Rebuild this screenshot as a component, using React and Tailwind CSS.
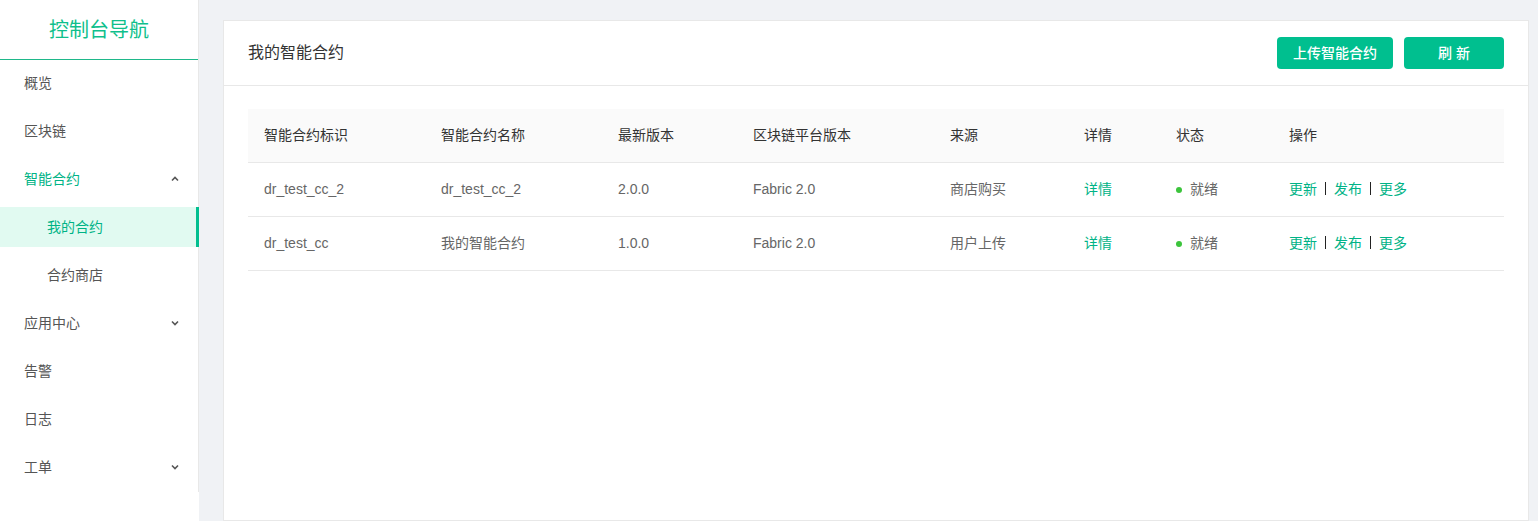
import React from "react";

const font = { fontFamily: '"Liberation Sans", "Noto Sans CJK SC", sans-serif' };

function Chevron({ up }) {
  return (
    <svg width="10" height="10" viewBox="0 0 10 10" className="text-[#555]">
      <path
        d={up ? "M2 6.5 L5 3.5 L8 6.5" : "M2 3.5 L5 6.5 L8 3.5"}
        fill="none"
        stroke="currentColor"
        strokeWidth="1.6"
      />
    </svg>
  );
}

const menu = [
  { label: "概览" },
  { label: "区块链" },
  { label: "智能合约", open: true, active: true },
  { label: "我的合约", sub: true, selected: true },
  { label: "合约商店", sub: true },
  { label: "应用中心", arrow: true },
  { label: "告警" },
  { label: "日志" },
  { label: "工单", arrow: true },
];

const rows = [
  {
    id: "dr_test_cc_2",
    name: "dr_test_cc_2",
    ver: "2.0.0",
    platform: "Fabric 2.0",
    source: "商店购买",
  },
  {
    id: "dr_test_cc",
    name: "我的智能合约",
    ver: "1.0.0",
    platform: "Fabric 2.0",
    source: "用户上传",
  },
];

const cols = ["w-[177px]", "w-[177px]", "w-[135px]", "w-[197px]", "w-[134px]", "w-[92px]", "w-[113px]", "flex-1"];

export default function App() {
  return (
    <div className="flex h-[521px] w-full bg-[#f0f2f5] overflow-hidden" style={font}>
      {/* Sidebar */}
      <div className="w-[199px] shrink-0 bg-white">
        <div className="h-[492px] border-r border-[#e8e8e8]">
          <div className="flex h-[60px] items-center justify-center border-b border-[#1fb88a] text-[20px] text-[#0fbf8c]">
            控制台导航
          </div>
          <div className="flex flex-col gap-[8px] pt-[3px]">
            {menu.map((m) => (
              <div
                key={m.label}
                className={`relative flex h-[40px] items-center justify-between pr-[18px] text-[14px] ${
                  m.sub ? "pl-[47px]" : "pl-[24px]"
                } ${m.selected ? "bg-[#e1faf1] text-[#00b386]" : m.active ? "text-[#00b386]" : "text-[#555]"}`}
              >
                <span>{m.label}</span>
                {m.open && <Chevron up />}
                {m.arrow && <Chevron />}
                {m.selected && <span className="absolute right-[-1px] top-0 h-full w-[3px] bg-[#00bf8f]" />}
              </div>
            ))}
          </div>
        </div>
      </div>

      {/* Main */}
      <div className="flex-1 pl-[24px] pr-[9px] pt-[20px]">
        <div className="h-full border border-[#e8e8e8] bg-white">
          <div className="flex h-[65px] items-center justify-between border-b border-[#e8e8e8] pl-[24px] pr-[24px]">
            <span className="text-[16px] text-[#333]">我的智能合约</span>
            <div className="flex gap-[11px]">
              <button className="h-[32px] w-[116px] rounded-[4px] bg-[#00bf8f] text-[14px] font-medium text-white">
                上传智能合约
              </button>
              <button className="h-[32px] w-[100px] rounded-[4px] bg-[#00bf8f] text-[14px] font-medium text-white">
                刷 新
              </button>
            </div>
          </div>

          <div className="px-[24px] pt-[23px]">
            <div className="flex h-[54px] items-center border-b border-[#e8e8e8] bg-[#fafafa] text-[14px] text-[#333]">
              {["智能合约标识", "智能合约名称", "最新版本", "区块链平台版本", "来源", "详情", "状态", "操作"].map((h, i) => (
                <div key={h} className={`${cols[i]} shrink-0 pl-[16px]`}>
                  {h}
                </div>
              ))}
            </div>
            {rows.map((r) => (
              <div key={r.id} className="flex h-[54px] items-center border-b border-[#e8e8e8] text-[14px] text-[#666]">
                <div className={`${cols[0]} shrink-0 pl-[16px]`}>{r.id}</div>
                <div className={`${cols[1]} shrink-0 pl-[16px]`}>{r.name}</div>
                <div className={`${cols[2]} shrink-0 pl-[16px]`}>{r.ver}</div>
                <div className={`${cols[3]} shrink-0 pl-[16px]`}>{r.platform}</div>
                <div className={`${cols[4]} shrink-0 pl-[16px]`}>{r.source}</div>
                <div className={`${cols[5]} shrink-0 pl-[16px] text-[#00b386]`}>详情</div>
                <div className={`${cols[6]} shrink-0 pl-[16px] flex items-center gap-[8px]`}>
                  <span className="h-[6px] w-[6px] rounded-full bg-[#3cc43c]" />
                  <span>就绪</span>
                </div>
                <div className={`${cols[7]} pl-[16px] flex items-center text-[#00b386]`}>
                  <span>更新</span>
                  <span className="mx-[8px] -mt-[2px] h-[13px] w-px bg-[#222]" />
                  <span>发布</span>
                  <span className="mx-[8px] -mt-[2px] h-[13px] w-px bg-[#222]" />
                  <span>更多</span>
                </div>
              </div>
            ))}
          </div>
        </div>
      </div>
    </div>
  );
}
